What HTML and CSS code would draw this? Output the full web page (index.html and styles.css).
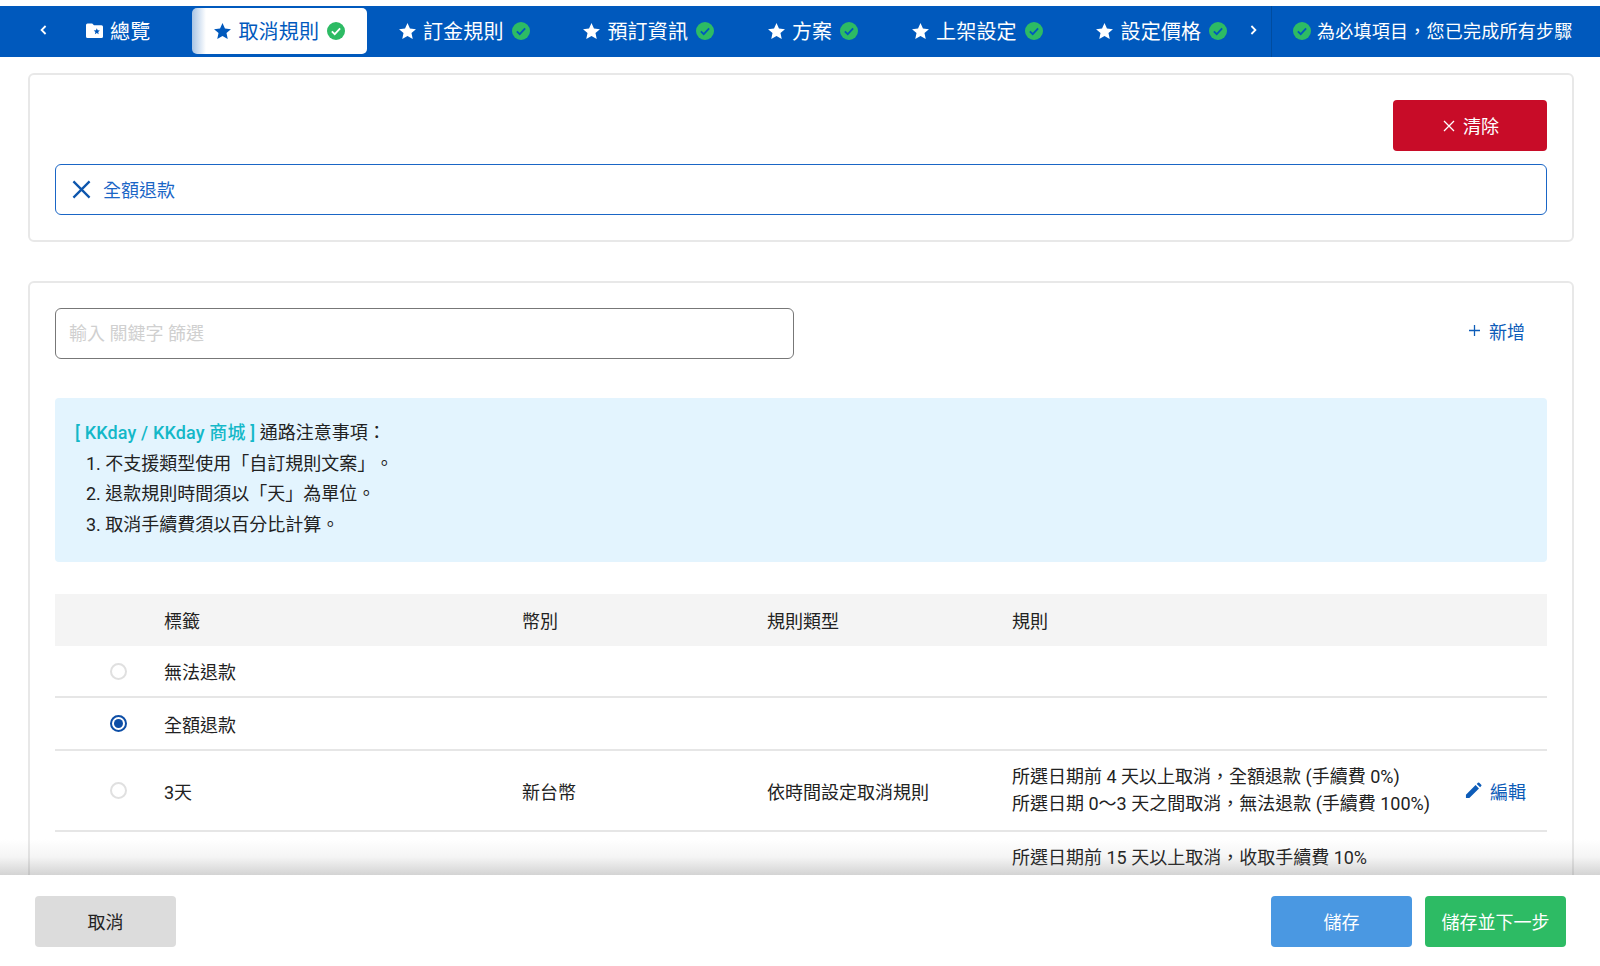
FILE: index.html
```html
<!DOCTYPE html>
<html lang="zh-Hant">
<head>
<meta charset="utf-8">
<title>取消規則</title>
<link rel="stylesheet" href="styles.css">
</head>
<body>
<svg class="defs" width="0" height="0" aria-hidden="true">
  <symbol id="star" viewBox="1.4 1.8 21.2 20.1"><path d="M12 1.8l3.1 6.9 7.5.8-5.6 5 1.6 7.4L12 18.1l-6.6 3.8L7 14.5l-5.6-5 7.5-.8z"/></symbol>
  <symbol id="ok" viewBox="0 0 20 20"><circle cx="10" cy="10" r="10" fill="#2dbb64"/><path d="M5.4 10.3l3.2 3.2 6-6.3" fill="none" stroke="currentColor" stroke-width="2"/></symbol>
</svg>
<header class="topbar">
  <div class="tabs">
    <svg class="chev chev-left" viewBox="0 0 7 10"><path d="M5.6 1L1.6 5l4 4" fill="none" stroke="#fff" stroke-width="1.8"/></svg>
    <div class="overview">
      <svg class="folder" viewBox="0 0 17 15"><path d="M0 2a1.5 1.5 0 0 1 1.5-1.5h4.7l1.8 1.8h7.5A1.5 1.5 0 0 1 17 3.8v9.7A1.5 1.5 0 0 1 15.500 15h-14A1.500 1.500 0 0 1 0 13.500z" fill="#fff"/><path d="M10.800 5.300l.9 2 2.200.2-1.700 1.500.5 2.200-1.900-1.100-1.900 1.100.5-2.200-1.700-1.500 2.200-.2z" fill="#0059bd"/></svg>
      <span>總覽</span>
    </div>
    <div class="tab active"><svg class="star"><use href="#star"/></svg><span>取消規則</span><svg class="ok ok-light"><use href="#ok"/></svg></div>
    <div class="tab"><svg class="star"><use href="#star"/></svg><span>訂金規則</span><svg class="ok"><use href="#ok"/></svg></div>
    <div class="tab"><svg class="star"><use href="#star"/></svg><span>預訂資訊</span><svg class="ok"><use href="#ok"/></svg></div>
    <div class="tab"><svg class="star"><use href="#star"/></svg><span>方案</span><svg class="ok"><use href="#ok"/></svg></div>
    <div class="tab"><svg class="star"><use href="#star"/></svg><span>上架設定</span><svg class="ok"><use href="#ok"/></svg></div>
    <div class="tab"><svg class="star"><use href="#star"/></svg><span>設定價格</span><svg class="ok"><use href="#ok"/></svg></div>
    <svg class="chev chev-right" viewBox="0 0 7 10"><path d="M1.400 1l4 4-4 4" fill="none" stroke="#fff" stroke-width="1.800"/></svg>
  </div>
  <div class="status"><svg class="ok"><use href="#ok"/></svg><span>為必填項目，您已完成所有步驟</span></div>
</header>

<main class="content">
  <section class="card card-selected">
    <div class="clear-row"><button class="btn btn-clear"><svg class="times" viewBox="0 0 12 12"><path d="M1 1l10 10M11 1L1 11" fill="none" stroke="#fff" stroke-width="1.300"/></svg>清除</button></div>
    <div class="selected">
      <svg class="x" viewBox="0 0 20 20"><path d="M1.500 1.500l17 17M18.500 1.500l-17 17" fill="none" stroke="currentColor" stroke-width="2.400"/></svg>
      <span class="selected-label">全額退款</span>
    </div>
  </section>

  <section class="card card-list">
    <div class="filter-row">
      <div class="filter"><span class="lift">輸入 關鍵字 篩選</span></div>
      <a class="add"><svg class="plus" viewBox="0 0 12 12"><path d="M6 0v12M0 6h12" fill="none" stroke="#0d5cb8" stroke-width="1.400"/></svg>新增</a>
    </div>
    <div class="notice">
      <p><span class="channel">[ KKday / KKday 商城 ]</span> 通路注意事項：</p>
      <ol>
        <li>1. 不支援類型使用「自訂規則文案」。</li>
        <li>2. 退款規則時間須以「天」為單位。</li>
        <li>3. 取消手續費須以百分比計算。</li>
      </ol>
    </div>
    <div class="table">
      <div class="row head"><div></div><div>標籤</div><div>幣別</div><div>規則類型</div><div>規則</div><div></div></div>
      <div class="row first"><div class="radio-cell"><i class="radio"></i></div><div>無法退款</div><div></div><div></div><div></div><div></div></div>
      <div class="row"><div class="radio-cell"><i class="radio on"></i></div><div>全額退款</div><div></div><div></div><div></div><div></div></div>
      <div class="row tall"><div class="radio-cell"><i class="radio"></i></div><div>3天</div><div>新台幣</div><div>依時間設定取消規則</div>
        <div class="rule"><div>所選日期前 4 天以上取消，全額退款 (手續費 0%)</div><div>所選日期 0～3 天之間取消，無法退款 (手續費 100%)</div></div>
        <a class="edit"><svg class="pen" viewBox="0 0 18 18"><path d="M1 17v-3.600L11.200 3.200l3.600 3.600L4.600 17zM12.400 2l1.300-1.200a1 1 0 0 1 1.400 0l2.100 2.100a1 1 0 0 1 0 1.400L16 5.600z"/></svg>編輯</a></div>
      <div class="row long"><div></div><div></div><div></div><div></div>
        <div class="rule"><div>所選日期前 15 天以上取消，收取手續費 10%</div></div><div></div></div>
    </div>
  </section>
</main>

<footer class="footer">
  <button class="btn btn-cancel">取消</button>
  <div class="footer-right">
    <button class="btn btn-save">儲存</button>
    <button class="btn btn-next">儲存並下一步</button>
  </div>
</footer>
</body>
</html>
```
FILE: styles.css
```css
* { box-sizing: border-box; }
html, body { margin: 0; height: 100%; }
body {
  height: 966px;
  overflow: hidden;
  position: relative;
  background: #fff;
  font-family: Roboto, "Noto Sans CJK TC", sans-serif;
  font-size: 18px;
  color: #222;
  padding-top: 6px;
  text-spacing-trim: space-all;
}
.defs { position: absolute; }
.topbar {
  height: 51px;
  background: #0059bd;
  display: flex;
  color: #fff;
}
.tabs {
  width: 1271px;
  flex: none;
  display: flex;
  align-items: center;
  padding-left: 40px;
}
.chev { width: 7px; height: 10px; flex: none; }
.chev-left { margin-top: -3px; }
.chev-right { margin-left: 1px; margin-top: -3px; }
.overview {
  display: flex;
  align-items: center;
  margin-left: 39px;
  margin-right: 32.3px;
  font-size: 20px;
  letter-spacing: .2px;
  padding-bottom: 2px;
}
.folder { width: 17px; height: 15px; margin-right: 7px; }
.tab {
  height: 46px;
  display: flex;
  align-items: center;
  padding: 0 22px;
  font-size: 20px;
  letter-spacing: .2px;
  white-space: nowrap;
  border-radius: 5px;
  margin-top: -1px;
  margin-left: 9.7px;
}
.tab span { padding-bottom: 2px; }
.tab.active {
  background: linear-gradient(90deg, #a8c4e4 0, #fff 14px);
  color: #0059bd;
}
.star { width: 17px; height: 16px; fill: currentColor; margin-right: 7px; flex: none; }
.ok { width: 18px; height: 18px; margin-left: 8px; flex: none; color: #0059bd; }
.ok-light { color: #fff; }
.status {
  flex: 1;
  border-left: 1px solid #004c9f;
  display: flex;
  align-items: center;
  padding-left: 21px;
  font-size: 18px;
  letter-spacing: .25px;
  white-space: nowrap;
}
.status span { padding-bottom: 4px; }
.status .ok { margin: 0 6px 2px 0; }

.content { padding: 16px 26px 0 28px; }
.card {
  border: 2px solid #e8e8e8;
  border-radius: 6px;
  background: #fff;
  padding: 0 25px;
}
.card-selected { height: 169px; padding-top: 25px; }
.card-list { margin-top: 39px; padding-top: 25px; height: 700px; }
.clear-row { display: flex; justify-content: flex-end; }
.btn {
  height: 51px;
  width: 141px;
  border: 0;
  border-radius: 4px;
  font: inherit;
  color: #fff;
  padding-bottom: 2px;
}
.btn-clear {
  width: 154px;
  background: #c80c28;
  display: flex;
  align-items: center;
  justify-content: center;
  padding-left: 8px;
}
.times { width: 12px; height: 12px; margin-right: 8px; margin-top: 2px; }
.selected {
  margin-top: 13px;
  height: 51px;
  border: 1px solid #1a66c6;
  border-radius: 6px;
  display: flex;
  align-items: center;
  padding-left: 16px;
  color: #1a66c6;
}
.selected-label { padding-bottom: 1px; }
.lift { padding-bottom: 3px; }
.x { width: 19px; height: 19px; margin-right: 12px; color: #0d56ad; }

.filter-row { display: flex; justify-content: space-between; align-items: center; }
.filter {
  width: 739px;
  height: 51px;
  border: 1px solid #777;
  border-radius: 6px;
  display: flex;
  align-items: center;
  padding-left: 13px;
  color: #d0d0d0;
}
.add {
  color: #0d5cb8;
  margin-right: 22px;
  display: flex;
  align-items: center;
  padding-bottom: 6px;
}
.plus { width: 11px; height: 11px; margin-right: 9px; }
.notice {
  margin-top: 39px;
  height: 164px;
  background: #e3f4fe;
  border-radius: 4px;
  padding: 20px 20px 0;
  color: #222;
  line-height: 30.7px;
}
.notice p { margin: 0; }
.channel { color: #14b8c8; font-weight: 500; letter-spacing: .15px; }
.notice ol { list-style: none; margin: 0; padding: 0 0 0 11px; }
.table { margin-top: 32px; }
.row {
  display: grid;
  grid-template-columns: 109px 358px 245px 245px 1fr 105px;
  align-items: center;
  height: 53px;
  border-bottom: 2px solid #e6e6e6;
}
.row.head { height: 52px; background: #f4f4f4; border-bottom: 0; }
.row.first { height: 52px; }
.row.tall { height: 81px; }
.row.long { height: 135px; align-items: start; padding-top: 14px; }
.radio-cell { padding-left: 55px; }
.radio {
  display: block;
  width: 17px;
  height: 17px;
  border-radius: 50%;
  border: 2px solid #e0e0e0;
  background: #fff;
}
.radio.on { border-color: #0d4ea6; position: relative; }
.radio.on::after {
  content: "";
  position: absolute;
  inset: 2px;
  border-radius: 50%;
  background: #0d4ea6;
}
.rule { line-height: 27px; white-space: nowrap; margin-top: -2px; }
.edit {
  color: #0d5cb8;
  display: flex;
  align-items: center;
  white-space: nowrap;
  justify-content: flex-end;
  padding-right: 21px;
}
.pen { width: 17px; height: 17px; fill: currentColor; margin-right: 8px; }

.footer {
  position: absolute;
  left: 0;
  right: 0;
  top: 875px;
  bottom: 0;
  background: #fff;
  display: flex;
  justify-content: space-between;
  padding: 21px 34px 0 35px;
}
.footer::before {
  content: "";
  position: absolute;
  left: 0;
  right: 0;
  top: -36px;
  height: 36px;
  background: linear-gradient(180deg, rgba(110,110,110,0), rgba(110,110,110,.07) 50%, rgba(110,110,110,.3));
  pointer-events: none;
}
.footer-right { display: flex; gap: 13px; }
.btn-cancel { background: #dcdcdc; color: #222; }
.btn-save { background: #4a98e2; }
.btn-next { background: #2dbb64; }
```
